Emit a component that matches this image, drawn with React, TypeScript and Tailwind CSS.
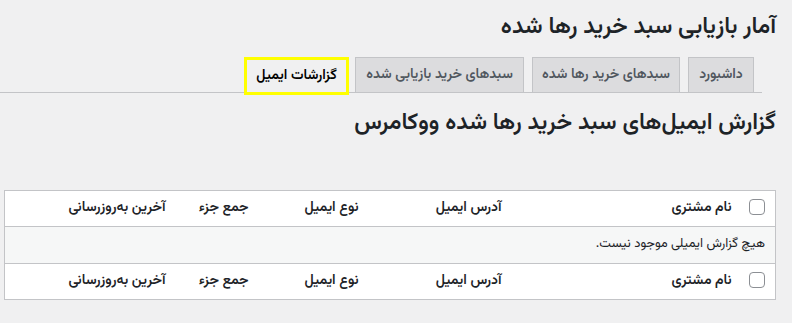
import React from "react";

const font = { fontFamily: '"Vazirmatn", "Noto Sans Arabic", "DejaVu Sans", sans-serif' };

function Checkbox() {
  return <span className="inline-block h-4 w-4 rounded-[4px] border border-[#8c8f94] bg-white align-middle" />;
}

function HeadRow() {
  return (
    <tr className="h-[36px] text-[14px] font-semibold">
      <td className="w-[36px] pr-[10px] pl-0 align-middle">
        <Checkbox />
      </td>
      <td className="w-[230px] px-2 align-middle">نام مشتری</td>
      <td className="w-[143px] px-2 align-middle">آدرس ایمیل</td>
      <td className="w-[110px] px-2 align-middle">نوع ایمیل</td>
      <td className="w-[83px] px-2 align-middle">جمع جزء</td>
      <td className="px-2 align-middle">آخرین به‌روزرسانی</td>
    </tr>
  );
}

export default function App() {
  return (
    <div dir="rtl" className="min-h-[323px] bg-[#f0f0f1] text-[#1d2327]" style={font}>
      <div className="pt-[9px]">
        <h1 className="mr-[16px] h-[48px] text-[23px] font-semibold leading-[36px]">آمار بازیابی سبد خرید رها شده</h1>
        <nav className="mr-[30px] flex h-[36px] items-start gap-2 border-b border-[#c3c4c7] pr-2 text-[14px] font-semibold">
          <span className="flex h-[36px] w-[66px] items-center justify-center border border-[#c3c4c7] bg-[#dcdcde] text-[#50575e]">داشبورد</span>
          <span className="flex h-[36px] w-[148px] items-center justify-center border border-[#c3c4c7] bg-[#dcdcde] text-[#50575e]">سبدهای خرید رها شده</span>
          <span className="flex h-[36px] w-[169px] items-center justify-center border border-[#c3c4c7] bg-[#dcdcde] text-[#50575e]">سبدهای خرید بازیابی شده</span>
          <span className="-mr-[2px] flex h-[38px] w-[105px] items-center justify-center border-[3px] border-[#ffff00] bg-[#f0f0f1] text-[#000]">گزارشات ایمیل</span>
        </nav>
        <h2 className="mr-[16px] mt-[10px] h-[57px] text-[23px] font-semibold leading-[40px]">گزارش ایمیل‌های سبد خرید رها شده ووکامرس</h2>
        <table className="mr-[16px] mt-[30px] w-[772px] border-collapse border border-[#c3c4c7] bg-white text-right">
          <thead>
            <HeadRow />
          </thead>
          <tbody>
            <tr className="h-[37px] border-y border-[#c3c4c7] bg-[#f6f7f7] text-[13px]">
              <td colSpan={6} className="pr-[10px] align-middle">هیچ گزارش ایمیلی موجود نیست.</td>
            </tr>
          </tbody>
          <tfoot>
            <HeadRow />
          </tfoot>
        </table>
      </div>
    </div>
  );
}
